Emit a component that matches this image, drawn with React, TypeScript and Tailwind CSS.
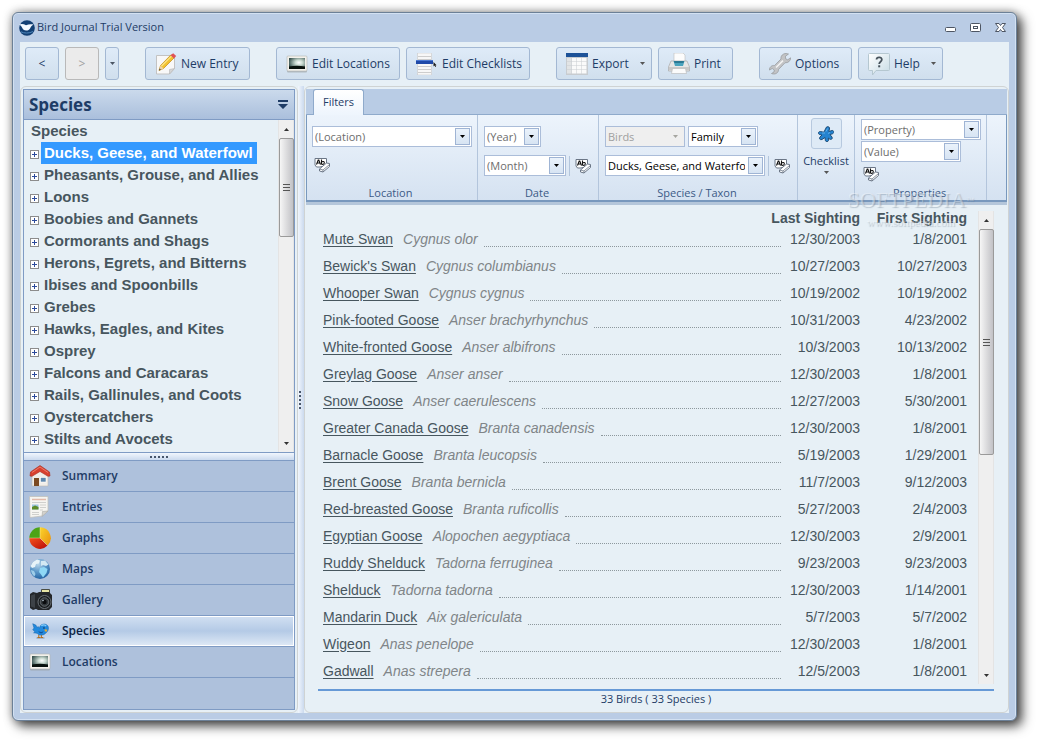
import type { ReactNode } from "react";

const families = [
  "Ducks, Geese, and Waterfowl",
  "Pheasants, Grouse, and Allies",
  "Loons",
  "Boobies and Gannets",
  "Cormorants and Shags",
  "Herons, Egrets, and Bitterns",
  "Ibises and Spoonbills",
  "Grebes",
  "Hawks, Eagles, and Kites",
  "Osprey",
  "Falcons and Caracaras",
  "Rails, Gallinules, and Coots",
  "Oystercatchers",
  "Stilts and Avocets",
];

const birds = [
  ["Mute Swan", "Cygnus olor", "12/30/2003", "1/8/2001"],
  ["Bewick's Swan", "Cygnus columbianus", "10/27/2003", "10/27/2003"],
  ["Whooper Swan", "Cygnus cygnus", "10/19/2002", "10/19/2002"],
  ["Pink-footed Goose", "Anser brachyrhynchus", "10/31/2003", "4/23/2002"],
  ["White-fronted Goose", "Anser albifrons", "10/3/2003", "10/13/2002"],
  ["Greylag Goose", "Anser anser", "12/30/2003", "1/8/2001"],
  ["Snow Goose", "Anser caerulescens", "12/27/2003", "5/30/2001"],
  ["Greater Canada Goose", "Branta canadensis", "12/30/2003", "1/8/2001"],
  ["Barnacle Goose", "Branta leucopsis", "5/19/2003", "1/29/2001"],
  ["Brent Goose", "Branta bernicla", "11/7/2003", "9/12/2003"],
  ["Red-breasted Goose", "Branta ruficollis", "5/27/2003", "2/4/2003"],
  ["Egyptian Goose", "Alopochen aegyptiaca", "12/30/2003", "2/9/2001"],
  ["Ruddy Shelduck", "Tadorna ferruginea", "9/23/2003", "9/23/2003"],
  ["Shelduck", "Tadorna tadorna", "12/30/2003", "1/14/2001"],
  ["Mandarin Duck", "Aix galericulata", "5/7/2003", "5/7/2002"],
  ["Wigeon", "Anas penelope", "12/30/2003", "1/8/2001"],
  ["Gadwall", "Anas strepera", "12/5/2003", "1/8/2001"],
];

function Caret({ className = "text-[#4b5563]" }: { className?: string }) {
  return (
    <svg viewBox="0 0 5 3" className={`h-[3px] w-[5px] shrink-0 ${className}`} aria-hidden="true">
      <path d="M0 0h5L2.5 3z" fill="currentColor" />
    </svg>
  );
}

function LogoIcon() {
  return (
    <svg viewBox="0 0 16 16" className="size-4 shrink-0" aria-hidden="true">
      <circle cx="8" cy="8" r="7.8" fill="#123f73" />
      <path d="M0 4.500C2.500 3.500 5 4 7 5.200c2.500-1 5-1.200 7.500-.6-1.500 1-2.500 2-3.300 3.600-.8 1.500-2.200 2.300-4 2.300-2.200 0-3.300-1.200-4.200-3C2.400 6.300 1.300 5.200 0 4.500z" fill="#f4f9ff" />
      <path d="M2 11.800c3 1.600 8 1.800 12-.3" fill="none" stroke="#4f86bb" />
    </svg>
  );
}

function NoteIcon() {
  return (
    <svg viewBox="0 0 22 22" className="size-[22px] shrink-0" aria-hidden="true">
      <path d="M1.500 2.500h14l4 1v12l-5 5.500h-13z" fill="#f8f8f8" stroke="#c3c3c3" />
      <path d="M19.500 15.500l-5 5.500v-4.500z" fill="#d5d5d5" stroke="#b5b5b5" strokeWidth=".6" />
      <path d="M4 17.500l1.500-5L16 1.800l3.200 3L8.500 15.500z" fill="#f2c230" stroke="#c08a16" strokeWidth=".7" />
      <path d="M6.500 13L17 2.600" stroke="#fbe58a" strokeWidth="1.200" />
      <path d="M15.500 2.300l2.700-2 3 2.700-2.200 2.500z" fill="#df5257" />
      <path d="M4 17.500l1.500-5 3 3z" fill="#ecd3a8" />
      <path d="M4 17.500l.7-2 1.200 1.200z" fill="#333" />
    </svg>
  );
}

function PhotoIcon() {
  return (
    <svg viewBox="0 0 22 22" className="size-[22px] shrink-0" aria-hidden="true">
      <defs>
        <radialGradient id="photoGlow" cx=".62" cy=".42" r=".65">
          <stop offset="0" stopColor="#ffffff" />
          <stop offset=".35" stopColor="#c9dad0" />
          <stop offset="1" stopColor="#3b5552" />
        </radialGradient>
      </defs>
      <rect x="1" y="3.500" width="20" height="16" rx="1" fill="#9aa0a2" opacity=".6" />
      <rect x="1" y="3" width="20" height="15" rx="1" fill="#f3f1ec" stroke="#b4b5b2" strokeWidth=".6" />
      <rect x="3" y="5" width="16" height="11" fill="url(#photoGlow)" />
      <path d="M3 13.500c6-1 11-.8 16 0V16H3z" fill="#08110c" />
    </svg>
  );
}

function ChecklistIcon() {
  return (
    <svg viewBox="0 0 22 22" className="size-[22px] shrink-0" aria-hidden="true">
      <rect x="1.500" y="0" width="14" height="22" fill="#f7f7f7" stroke="#c9c9c9" strokeWidth=".6" />
      <path d="M2 3.500h13M2 6.500h13M2 13.500h13M2 16.500h13M2 19.500h13" stroke="#cdcdcd" />
      <rect x="0" y="7" width="17" height="4" fill="#1f49a8" />
      <path d="M0 7.500h17" stroke="#4b78d2" />
      <path d="M17.500 9v4.500l1-.9.8 1.400.8-.5-.7-1.300h1.200z" fill="#1b1b1b" />
    </svg>
  );
}

function GridIcon() {
  return (
    <svg viewBox="0 0 22 22" className="size-[22px] shrink-0" aria-hidden="true">
      <rect x="0" y="0" width="22" height="22" fill="#c8ccd0" />
      <rect x="0" y="0" width="22" height="4" fill="#1d5298" />
      {[5, 9, 13, 17].map((y) =>
        [1, 6, 11, 16].map((x) => (
          <rect key={`${x}-${y}`} x={x} y={y} width="4.500" height="3.500" fill={x === 1 ? "#e2e4e5" : "#fafafa"} />
        ))
      )}
    </svg>
  );
}

function PrinterIcon() {
  return (
    <svg viewBox="0 0 22 22" className="size-[22px] shrink-0" aria-hidden="true">
      <path d="M6 0h9l2 2v7H6z" fill="#fcfcfc" stroke="#bcbcbc" strokeWidth=".6" />
      <path d="M3 8h16l2.500 6v4h-21v-4z" fill="#e6e6e6" stroke="#a9a9a9" strokeWidth=".7" />
      <path d="M5.500 8h11l-1.500 5H7z" fill="#4aa3bd" />
      <path d="M6 8h10l-.5 2h-9z" fill="#2b7893" />
      <path d="M1 14h20v3H1z" fill="#c9c9c9" />
      <path d="M4.500 15.500h13l1 5h-15z" fill="#fbfbfb" stroke="#b7b7b7" strokeWidth=".6" />
    </svg>
  );
}

function WrenchIcon() {
  return (
    <svg viewBox="0 0 22 22" className="size-[22px] shrink-0" aria-hidden="true">
      <path
        d="M17 .5c-3 0-5.500 2.300-5 5.500L5.500 12.500C3 12 .5 14 .3 17l3-1.500 2 1.500-.3 2-2.500 1.500c3.500 1.500 7.200-.5 7-4L16 9.800c3 .3 5.600-1.800 5.700-5l-3 2-2.200-1.200V3.200L19.500 1z"
        fill="#c2c3c5"
        stroke="#94969a"
        strokeWidth=".7"
      />
      <path d="M7 14.500L14 7.600" stroke="#f3f3f3" strokeWidth="1.500" />
    </svg>
  );
}

function HelpIcon() {
  return (
    <svg viewBox="0 0 22 22" className="size-[22px] shrink-0" aria-hidden="true">
      <defs>
        <linearGradient id="helpFill" x1="0" y1="0" x2="1" y2="1">
          <stop offset="0" stopColor="#ffffff" />
          <stop offset="1" stopColor="#c6dbe4" />
        </linearGradient>
      </defs>
      <path d="M1.500.5h19q1 0 1 1v15q0 1-1 1H8L4.500 22v-4.500h-3q-1 0-1-1v-15q0-1 1-1z" fill="url(#helpFill)" stroke="#b5c7d0" />
      <path d="M8.500 6.500c.2-3 5.500-3 5.300.3-.1 2-2.600 2-2.600 4.200" fill="none" stroke="#46525b" strokeWidth="1.800" />
      <rect x="10.200" y="12.300" width="2" height="2" fill="#46525b" />
    </svg>
  );
}

function EraserIcon() {
  return (
    <svg viewBox="0 0 16 16" className="size-4" aria-hidden="true">
      <path d="M1 1.500h11.500v7L6 10H2.500L1 8z" fill="#fff" stroke="#6b7686" />
      <path d="M2.500 7.500l1.700-4.500h.6l1.700 4.500M3.300 6h2.500M7.500 2.500v5M7.500 5c1.500-1 3-.4 2.800 1-.2 1.300-1.600 1.800-2.800 1" fill="none" stroke="#111" strokeWidth="1.100" />
      <path d="M5.500 12l7-6 3 .5v3L9 15l-3.500-1z" fill="#fff" stroke="#6b7686" />
      <path d="M5.500 12l3.500 1 6.500-5.500M9 13v2" fill="none" stroke="#6b7686" strokeWidth=".8" />
    </svg>
  );
}

function SplatIcon() {
  return (
    <svg viewBox="0 0 16 16" className="size-4" aria-hidden="true">
      <path
        d="M8.500 1c2-1 3.500.3 3 2l-.7 2.500L14 4.500c2-.3 2.500 2.500.5 3.300l-2.500.8 2 2.400c1 2-1 3-2.500 2L10.300 12l.2 2.500c-.3 1.500-3 1.500-3.200-.2L7 11.500l-3 2c-2 .8-3.200-1-2-2.500l2-2L1.500 8.500c-2-.8-1-3.300 1-3l3.300.7z"
        fill="#2583cf"
        stroke="#17456f"
        strokeWidth=".9"
      />
      <path d="M8 5.500l1.500-3M4 7h3M12 6.500l-2 1" stroke="#5fb0ea" />
    </svg>
  );
}

function HouseIcon() {
  return (
    <svg viewBox="0 0 22 22" className="size-[22px]" aria-hidden="true">
      <path d="M3 9l8-6 8 6v12H3z" fill="#f1eee9" stroke="#bdb9b2" strokeWidth=".6" />
      <path d="M11 .5l9.500 6.500.5 4-2 .3L11 6.500 3 11.300 1 11l.5-4z" fill="#d8402f" stroke="#a42c1f" strokeWidth=".6" />
      <path d="M3 7.500l8-5.500 8 5.500" fill="none" stroke="#ef7d69" />
      <rect x="5" y="13" width="5" height="8" fill="#7b4a22" />
      <rect x="11.500" y="12.500" width="5.500" height="4.500" fill="#5d87ad" stroke="#fff" strokeWidth=".6" />
    </svg>
  );
}

function NewsIcon() {
  return (
    <svg viewBox="0 0 22 22" className="size-[22px]" aria-hidden="true">
      <path d="M.5.5h18.500v14.500L13 20l-12 1.500z" fill="#f6f5f1" stroke="#c2c1bd" strokeWidth=".8" />
      <path d="M19 15l-6 5.500.5-5z" fill="#d3d2ce" stroke="#aaa9a5" strokeWidth=".6" />
      <path d="M3 3.500h14" stroke="#e3b9a9" strokeWidth="1.500" />
      <path d="M3 6.500h14M11 9h6M11 11.500h6M11 14h3M3 16.500h7M3 18.500h7" stroke="#d0d0cd" />
      <rect x="3" y="8.500" width="6.500" height="5" fill="#9cc4de" />
      <path d="M3 11l3-1.500 3.500 1.500v2.500H3z" fill="#5d8b27" />
    </svg>
  );
}

function PieIcon() {
  return (
    <svg viewBox="0 0 22 22" className="size-[22px]" aria-hidden="true">
      <defs>
        <linearGradient id="pieRed" x1="0" y1="0" x2="1" y2="1">
          <stop offset="0" stopColor="#f5511d" />
          <stop offset="1" stopColor="#b80c06" />
        </linearGradient>
        <linearGradient id="pieGold" x1="0" y1="0" x2="1" y2="1">
          <stop offset="0" stopColor="#fbd52d" />
          <stop offset="1" stopColor="#e98f0c" />
        </linearGradient>
      </defs>
      <path d="M11 11H.3A10.700 10.700 0 0 0 18.600 18.600z" fill="url(#pieRed)" />
      <path d="M11 11V.3a10.700 10.700 0 0 1 7.600 18.300z" fill="url(#pieGold)" />
      <path d="M11 11H.3A10.700 10.700 0 0 1 11 .3z" fill="#4da416" />
      <path d="M11 .3V11L18.600 18.600M11 11H.3" fill="none" stroke="#fff3c4" strokeWidth=".4" />
    </svg>
  );
}

function GlobeIcon() {
  return (
    <svg viewBox="0 0 22 22" className="size-[22px]" aria-hidden="true">
      <defs>
        <radialGradient id="globeFill" cx=".4" cy=".25" r=".8">
          <stop offset="0" stopColor="#b9d6ea" />
          <stop offset=".5" stopColor="#5b97c8" />
          <stop offset="1" stopColor="#1f5f9f" />
        </radialGradient>
      </defs>
      <circle cx="11" cy="11" r="10" fill="url(#globeFill)" />
      <path d="M4 4l4-2.500 3 1-1 3-3 .5-1 3-3 1-1.500-2z" fill="#e7f3f8" />
      <path d="M12 3l4-.5 3.500 4L17 8l-3-1-2 1z" fill="#d3e9f3" />
      <path d="M11 10l4-1 3.500 2-1 4-3.500 4.500-2-3-2-2.500z" fill="#8fd8f5" />
      <path d="M2 12l3 1 1.500 3-1 2.500C3.500 17 2.200 15 2 12z" fill="#9fcde8" />
    </svg>
  );
}

function CameraIcon() {
  return (
    <svg viewBox="0 0 24 22" className="h-[22px] w-6" aria-hidden="true">
      <rect x="12" y="0" width="9" height="6" rx="1" fill="#4b4d42" />
      <rect x="13" y="1" width="7" height="3" fill="#e9e7a6" />
      <path d="M1 5l3-2 4 1 2-1h10l3 3v12l-3 3H9l-2-1-3 1-3-2z" fill="#24272a" />
      <path d="M2 6.500l4-1.500v14l-4-1.500z" fill="#3d4247" />
      <circle cx="15.500" cy="13" r="6.500" fill="#171a1c" stroke="#6b7278" />
      <circle cx="15.500" cy="13" r="4.300" fill="#33383c" stroke="#878e94" strokeWidth=".6" />
      <circle cx="15.500" cy="13" r="2.200" fill="#0a0c0e" />
      <circle cx="14" cy="11.500" r=".8" fill="#b9c6d0" />
    </svg>
  );
}

function BirdIcon() {
  return (
    <svg viewBox="0 0 22 22" className="ml-0.5 size-[19px]" aria-hidden="true">
      <ellipse cx="11" cy="18.500" rx="5" ry="1" fill="#7e8ca0" opacity=".6" />
      <path d="M9 15v3M12 15v3M7.500 18h3M11 18h3" stroke="#b5701e" strokeWidth="1.200" />
      <path d="M2 2l3.500 1.500L7 6l1.500-.5L10 7c0-5 8-6.500 10-1.500.8 3-.5 5.500-3 7.500-2.500 2.800-8 3-10 0L3 12.500 4.500 11 2 9l1.500-2z" fill="#2289dd" stroke="#1466ae" strokeWidth=".6" />
      <path d="M8.500 10c2 2.200 4.500 2.200 6 0-.5 3.500-4.500 4.500-6 0z" fill="#0f56a0" />
      <path d="M12 4.500c1.500-1.800 4.500-1.600 5.500.3" fill="none" stroke="#8bd0fb" strokeWidth="1.400" />
      <path d="M16 8.500l3 .5-1.200 2.500-2-1z" fill="#efab2b" />
      <circle cx="15" cy="7" r=".9" fill="#0b2748" />
    </svg>
  );
}

const navItems = [
  { label: "Summary", icon: <HouseIcon /> },
  { label: "Entries", icon: <NewsIcon /> },
  { label: "Graphs", icon: <PieIcon /> },
  { label: "Maps", icon: <GlobeIcon /> },
  { label: "Gallery", icon: <CameraIcon /> },
  { label: "Species", icon: <BirdIcon />, active: true },
  { label: "Locations", icon: <PhotoIcon /> },
];

function ToolButton({ icon, label, width, menu }: { icon: ReactNode; label: string; width: string; menu?: boolean }) {
  return (
    <button
      type="button"
      className={`flex h-[33px] items-center gap-1 whitespace-nowrap rounded-[3px] border border-[#a3b8d3] bg-linear-to-b from-[#dfebf8] to-[#d0dfed] pl-[9px] pr-1.5 text-[#1e3c66] ${width}`}
    >
      {icon}
      <span>{label}</span>
      {menu && <Caret className="ml-auto text-[#555]" />}
    </button>
  );
}

function Combo({ label, value, width, tone = "text-[#6d6d6d]", disabled }: { label: string; value: string; width: string; tone?: string; disabled?: boolean }) {
  return (
    <div className={`relative h-[21px] ${width}`}>
      <select
        aria-label={label}
        disabled={disabled}
        className={`h-full w-full appearance-none overflow-hidden border border-[#abbdd9] pl-0.5 pr-[19px] leading-[19px] ${
          disabled ? "bg-[#efefef] text-[#a0a0a0]" : `bg-white ${tone}`
        }`}
      >
        <option>{value}</option>
      </select>
      <span
        className={`pointer-events-none absolute inset-y-[2px] right-[2px] flex w-[15px] items-center justify-center ${
          disabled ? "" : "border border-[#9fb4d4] bg-linear-to-b from-[#eaf2fb] to-[#d7e4f3]"
        }`}
      >
        <Caret className={disabled ? "text-[#a5a5a0]" : "text-black"} />
      </span>
    </div>
  );
}

function ClearButton({ label }: { label: string }) {
  return (
    <button type="button" aria-label={label} className="block size-4">
      <EraserIcon />
    </button>
  );
}

function RibbonGroup({ title, width, pad = "pl-1.5 pt-[11px]", children }: { title: string; width: string; pad?: string; children: ReactNode }) {
  return (
    <div className={`flex flex-col justify-between border-r border-[#b3c5dc] ${width} ${pad}`}>
      <div>{children}</div>
      <div className="pr-2 text-center leading-[15px] text-[#3c5a86]">{title}</div>
    </div>
  );
}

function Scrollbar({ thumb }: { thumb: string }) {
  return (
    <div className="flex w-4 shrink-0 flex-col items-center border-x border-[#e4e4e4] bg-[#efefef]" aria-hidden="true">
      <div className="flex h-[18px] items-center">
        <Caret className="rotate-180 text-[#333]" />
      </div>
      <div className={`flex w-[15px] flex-col items-center justify-center gap-0.5 rounded-[2px] border border-[#9a9a9a] bg-linear-to-r from-[#f6f6f6] to-[#c2c2c6] ${thumb}`}>
        <i className="h-px w-[7px] bg-[#555]" />
        <i className="h-px w-[7px] bg-[#555]" />
        <i className="h-px w-[7px] bg-[#555]" />
      </div>
      <div className="mt-auto flex h-[17px] items-center">
        <Caret className="text-[#333]" />
      </div>
    </div>
  );
}

function Sidebar() {
  return (
    <aside className="flex w-[278px] shrink-0 flex-col rounded-md border border-[#cfd3d3] p-[2px]">
      <div className="flex flex-1 flex-col border border-[#7f9bc4]">
        <header className="flex h-[30px] items-center justify-between border-b border-[#7f9bc4] bg-linear-to-b from-[#cbdaec] to-[#aabfdc] pl-[5px] pr-1.5">
          <h1 className="text-[17px] font-bold leading-6 text-[#1e3c66]">Species</h1>
          <button type="button" aria-label="Panel options">
            <svg viewBox="0 0 10 9" className="h-[9px] w-2.5" fill="#1e3c66" aria-hidden="true">
              <path d="M0 0h10v2H0zM0 4h10L5 9z" />
            </svg>
          </button>
        </header>

        <div className="flex flex-1">
          <div className="flex-1 whitespace-nowrap font-['Liberation_Sans',sans-serif] text-[15px] font-bold leading-[22px] text-[#47565e]">
            <div className="pl-[7px]">Species</div>
            <ul>
              {families.map((family, i) => (
                <li key={family} className="flex items-center pl-1.5">
                  <button type="button" aria-label={`Expand ${family}`} className="mr-0.5 mt-0.5">
                    <svg viewBox="0 0 9 9" className="size-[9px]" aria-hidden="true">
                      <rect x=".5" y=".5" width="8" height="8" fill="#fff" stroke="#8c8c8c" />
                      <path d="M2 4.500h5M4.500 2v5" stroke="#2b4a9b" />
                    </svg>
                  </button>
                  <span className={i === 0 ? "bg-[#3399ff] pl-[3px] pr-1 text-white" : "pl-[3px]"}>{family}</span>
                </li>
              ))}
            </ul>
          </div>
          <Scrollbar thumb="h-[99px]" />
        </div>

        <div className="flex h-[9px] items-center justify-center gap-0.5 border-y border-[#7f9bc4] bg-linear-to-b from-[#f1f6fd] to-[#cbdaee]">
          {[0, 1, 2, 3, 4].map((n) => (
            <i key={n} className="size-0.5 bg-[#47566b]" />
          ))}
        </div>

        <nav className="min-h-[248px] bg-[#aec1dc]">
          {navItems.map((item) => (
            <button
              key={item.label}
              type="button"
              className={`flex h-[31px] w-full items-center border-b border-[#7f9bc4] text-[12px] font-semibold ${
                item.active
                  ? "bg-linear-to-b from-[#d2e0f2] via-[#b4cae6] to-[#e0eaf6] text-[#0b1f44] inset-ring inset-ring-white"
                  : "text-[#1e3c66]"
              }`}
            >
              <span className="ml-[5px] flex w-[33px] shrink-0">{item.icon}</span>
              {item.label}
            </button>
          ))}
        </nav>
      </div>
    </aside>
  );
}

function Ribbon() {
  return (
    <section aria-label="Filters">
      <div className="flex h-[26px] items-end border-b border-[#8faacb] bg-[#b9cce5] pl-[7px]">
        <button type="button" className="-mb-px h-[26px] w-[51px] rounded-t-[3px] border border-b-0 border-[#8faacb] bg-linear-to-b from-white to-[#eef5fd] text-[#1e3c66]">
          Filters
        </button>
      </div>
      <div className="flex h-[87px] border border-t-0 border-b-2 border-[#7898bd] bg-linear-to-b from-[#edf4fc] to-[#d5e2f1] shadow-[0_3px_0_#b4c6da]">
        <RibbonGroup title="Location" width="w-[171px]" pad="pl-[5px] pt-[11px]">
          <Combo label="Location" value="(Location)" width="w-[160px]" />
          <div className="mt-2.5 pl-0.5">
            <ClearButton label="Clear location" />
          </div>
        </RibbonGroup>
        <RibbonGroup title="Date" width="w-[121px]">
          <Combo label="Year" value="(Year)" width="w-[57px]" />
          <div className="mt-2 flex items-center">
            <Combo label="Month" value="(Month)" width="w-[82px]" />
            <i className="mx-[3px] h-5 w-px bg-[#b3c5dc]" />
            <span className="pl-0.5">
              <ClearButton label="Clear date" />
            </span>
          </div>
        </RibbonGroup>
        <RibbonGroup title="Species / Taxon" width="w-[199px]">
          <div className="flex gap-[3px]">
            <Combo label="Group" value="Birds" width="w-[80px]" disabled />
            <Combo label="Rank" value="Family" width="w-[70px]" tone="text-black" />
          </div>
          <div className="mt-2 flex items-center">
            <Combo label="Taxon" value="Ducks, Geese, and Waterfowl" width="w-[160px]" tone="text-black" />
            <i className="mx-[3px] h-5 w-px bg-[#b3c5dc]" />
            <span className="pl-0.5">
              <ClearButton label="Clear taxon" />
            </span>
          </div>
        </RibbonGroup>
        <button type="button" className="flex w-[57px] flex-col items-center border-r border-[#b3c5dc] pt-[3px] text-[#1e3c66]">
          <span className="flex size-[31px] items-center justify-center rounded-[3px] border border-[#b7c9df] bg-[#deeaf6]">
            <SplatIcon />
          </span>
          <span className="mt-1 leading-4">Checklist</span>
          <Caret className="mt-0.5 text-[#555]" />
        </button>
        <RibbonGroup title="Properties" width="w-[132px]" pad="pl-1.5 pt-1">
          <Combo label="Property" value="(Property)" width="w-[120px]" />
          <div className="mt-px">
            <Combo label="Value" value="(Value)" width="w-[100px]" />
          </div>
          <div className="mt-1 h-3 pl-0.5">
            <ClearButton label="Clear properties" />
          </div>
        </RibbonGroup>
      </div>
    </section>
  );
}

function BirdTable() {
  return (
    <div className="mt-[9px] flex flex-1 pl-3 pr-[13px]">
      <div className="flex-1 pl-[5px] pr-[11px]">
        <table className="w-full table-fixed border-collapse font-['Liberation_Sans',sans-serif] text-[14px] text-[#47565e]">
          <thead>
            <tr className="h-3.5 whitespace-nowrap leading-[14px]">
              <th className="p-0" aria-label="Bird" />
              <th className="w-[79px] p-0">
                <div className="flex justify-end">Last Sighting</div>
              </th>
              <th className="w-[107px] p-0 text-right">First Sighting</th>
            </tr>
          </thead>
          <tbody>
            {birds.map(([name, latin, last, first]) => (
              <tr key={name} className="h-[27px] leading-4">
                <td className="p-0">
                  <div className="flex items-center whitespace-nowrap">
                    <a href="#" className="underline underline-offset-2">{name}</a>
                    <em className="ml-2.5 text-[#808588]">{latin}</em>
                    <i className="ml-1.5 h-4 flex-1 border-b border-dotted border-[#8d989d]" />
                  </div>
                </td>
                <td className="p-0 text-right">{last}</td>
                <td className="p-0 text-right">{first}</td>
              </tr>
            ))}
          </tbody>
        </table>
      </div>
      <Scrollbar thumb="h-[226px]" />
    </div>
  );
}

export default function App() {
  return (
    <div className="flex min-h-screen bg-white pb-5 pl-3 pr-5 pt-3 font-['Open_Sans','Noto_Sans',sans-serif] text-[11px]">
      <div className="flex flex-1 flex-col rounded-md border border-[#6c8097] bg-[#bacce5] px-[7px] pb-[7px] inset-ring inset-ring-[#d3e1f2] shadow-[5px_5px_12px_rgba(0,0,0,0.7),0_0_10px_rgba(0,0,0,0.35)]">
        <header className="-ml-px flex h-[29px] items-center">
          <LogoIcon />
          <span className="ml-0.5 text-[11px] text-[#1e3c66]">Bird Journal Trial Version</span>
          <div className="ml-auto flex items-center gap-3.5 pr-[3px]">
            <button type="button" aria-label="Minimize">
              <svg viewBox="0 0 11 11" className="size-[11px]" aria-hidden="true">
                <rect x=".5" y="5.500" width="10" height="4" rx="1" fill="#fff" stroke="#4d5563" />
              </svg>
            </button>
            <button type="button" aria-label="Maximize">
              <svg viewBox="0 0 11 11" className="size-[11px]" aria-hidden="true">
                <rect x=".5" y="1.500" width="10" height="8" rx="1" fill="#fff" stroke="#4d5563" />
                <rect x="3.500" y="4.500" width="4" height="2" fill="#fff" stroke="#4d5563" />
              </svg>
            </button>
            <button type="button" aria-label="Close">
              <svg viewBox="0 0 11 11" className="size-[11px]" aria-hidden="true">
                <path d="M.5 1.500H4l1.500 2 1.500-2h3.500L7.500 5.500l3 4H7l-1.500-2-1.500 2H.5l3-4z" fill="#fff" stroke="#4d5563" />
              </svg>
            </button>
          </div>
        </header>

        <div className="flex flex-1 flex-col bg-[#e7f0f6]">
          <div className="flex h-11 items-start whitespace-nowrap pl-[5px] pt-[5px] text-[12px]">
            <button type="button" className="mr-1.5 h-[33px] w-[34px] rounded-[3px] border border-[#a3b8d3] bg-linear-to-b from-[#dfebf8] to-[#d0dfed] text-[#1e3c66]">
              &lt;
            </button>
            <button type="button" disabled className="mr-1.5 h-[33px] w-[34px] rounded-[3px] border border-[#b9b9b9] bg-[#ebebeb] text-[#a0a0a0]">
              &gt;
            </button>
            <button type="button" aria-label="History" className="mr-[26px] flex h-[33px] w-3.5 items-center justify-center rounded-[3px] border border-[#a3b8d3] bg-linear-to-b from-[#dfebf8] to-[#d0dfed]">
              <Caret />
            </button>
            <ToolButton icon={<NoteIcon />} label="New Entry" width="mr-[26px] w-[105px]" />
            <ToolButton icon={<PhotoIcon />} label="Edit Locations" width="mr-1.5 w-[124px]" />
            <ToolButton icon={<ChecklistIcon />} label="Edit Checklists" width="mr-[26px] w-[124px]" />
            <ToolButton icon={<GridIcon />} label="Export" width="mr-1.5 w-[96px]" menu />
            <ToolButton icon={<PrinterIcon />} label="Print" width="mr-[26px] w-[75px]" />
            <ToolButton icon={<WrenchIcon />} label="Options" width="mr-1.5 w-[93px]" />
            <ToolButton icon={<HelpIcon />} label="Help" width="w-[85px]" menu />
          </div>

          <div className="flex flex-1">
            <Sidebar />

            {/* Splitter */}
            <div className="flex w-1.5 shrink-0 flex-col items-start justify-center gap-0.5 bg-linear-to-r from-[#f1f6fd] to-[#cbdaee] pl-px">
              {[0, 1, 2, 3, 4].map((n) => (
                <i key={n} className="size-0.5 bg-[#47566b]" />
              ))}
            </div>

            <main className="relative flex flex-1 flex-col rounded-md border border-[#cfd3d3] px-px pt-[2px]">
              <Ribbon />
              <BirdTable />
              <footer className="ml-3 mr-[13px] mt-[5px] border-t-2 border-[#6699d6] pb-[5px] text-center text-[11px] leading-4 text-[#1e3c66]">
                33 Birds ( 33 Species )
              </footer>

              {/* Watermark */}
              <div className="pointer-events-none absolute right-[34px] top-[101px] text-center font-['Liberation_Serif',serif] text-white/40 [text-shadow:1px_1px_1px_rgba(90,110,130,0.35)]">
                <div className="text-[22px] leading-6">
                  SOFTPEDIA<sup className="text-[8px]">™</sup>
                </div>
                <div className="text-[11px] leading-5">www.softpedia.com</div>
              </div>
            </main>
          </div>
        </div>
      </div>
    </div>
  );
}
